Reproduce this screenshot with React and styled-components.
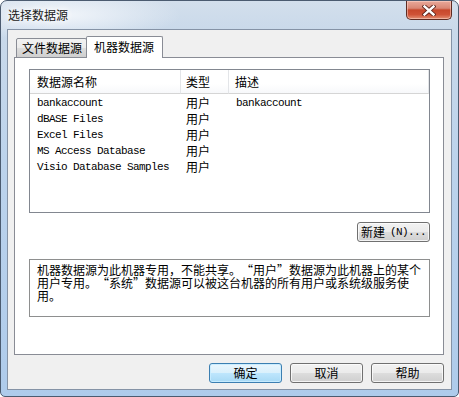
import React from 'react'
import styled, { createGlobalStyle } from 'styled-components'

const GlobalStyle = createGlobalStyle`
    html, body {
        margin: 0;
        padding: 0;
        overflow: hidden;
        background: #fff;
    }
`

const CJK = `"Noto Sans CJK SC", "Liberation Sans", sans-serif`
const MONO = `"Liberation Mono", "Noto Sans CJK SC", monospace`

const Window = styled.div`
    width: 459px;
    height: 397px;
    box-sizing: border-box;
    border: 1px solid #4b5b70;
    border-radius: 7px 7px 5px 5px;
    padding: 0 6px 6px 6px;
    display: flex;
    flex-direction: column;
    background:
        radial-gradient(ellipse 120px 26px at 60px 14px, rgba(245, 248, 252, 0.9), rgba(245, 248, 252, 0) 100%),
        linear-gradient(to bottom, #d3dfec 0px, #c9d9ea 30px, #bcd3ec 160px, #aecbeb 397px);
    font-family: ${CJK};
    font-size: 12px;
    color: #000;
`

const TitleBar = styled.div`
    height: 28px;
    display: flex;
    align-items: flex-start;
    justify-content: space-between;
`

const Title = styled.div`
    padding: 7px 0 0 1px;
    line-height: 14px;
    color: #1a1a1a;
    text-shadow: 0 0 6px #fff, 0 0 10px #fff;
`

const CloseBtn = styled.div`
    width: 46px;
    height: 19px;
    box-sizing: border-box;
    border: 1px solid #5e2b22;
    border-top: none;
    border-radius: 0 0 5px 5px;
    background: linear-gradient(to bottom, #e9a99a 0%, #d98775 40%, #c7472b 50%, #cf5236 75%, #e38f73 100%);
    box-shadow: inset 0 0 0 1px rgba(255, 220, 210, 0.5);
    display: flex;
    align-items: center;
    justify-content: center;
`

const Client = styled.div`
    flex: 1;
    border: 1px solid #8593a6;
    background: #f0f0f0;
    display: flex;
    flex-direction: column;
    padding: 6px 7px 0 6px;
`

const TabStrip = styled.div`
    display: flex;
    align-items: flex-end;
    height: 21px;
    padding-left: 2px;
    position: relative;
    z-index: 1;
`

const Tab = styled.div`
    box-sizing: border-box;
    border: 1px solid #898c95;
    border-bottom: ${({ $active }) => ($active ? 'none' : '1px solid #898c95')};
    border-radius: 2px 2px 0 0;
    width: ${({ $active }) => ($active ? '77px' : '71px')};
    height: ${({ $active }) => ($active ? '22px' : '20px')};
    margin-left: ${({ $active }) => ($active ? '-1px' : '0')};
    margin-bottom: -1px;
    background: ${({ $active }) =>
        $active ? '#fff' : 'linear-gradient(to bottom, #f2f2f2 0%, #ebebeb 50%, #dddddd 51%, #cfcfcf 100%)'};
    padding-left: ${({ $active }) => ($active ? '7px' : '5px')};
    padding-top: ${({ $active }) => ($active ? '3px' : '2px')};
    line-height: 14px;
    font-size: 12px;
    white-space: nowrap;
`

const Panel = styled.div`
    box-sizing: border-box;
    height: 298px;
    border: 1px solid #898c95;
    background: #fff;
    padding: 11px 14px 0 14px;
    display: flex;
    flex-direction: column;
    align-items: flex-start;
`

const List = styled.div`
    box-sizing: border-box;
    width: 401px;
    height: 144px;
    border: 1px solid #828790;
    background: #fff;
`

const Grid = styled.div`
    display: grid;
    grid-template-columns: 151px 48px 200px;
`

const HeadCell = styled.div`
    box-sizing: border-box;
    height: 24px;
    border-right: 1px solid #e3e5e8;
    border-bottom: 1px solid #d5d5d5;
    padding-left: ${({ $pad }) => $pad}px;
    padding-top: 5px;
    line-height: 14px;
    background: linear-gradient(to bottom, #fff 0%, #fff 60%, #f7f8fa 100%);
`

const Rows = styled.div`
    padding-top: 1px;
`

const Cell = styled.div`
    height: 16px;
    line-height: 16px;
    padding-left: ${({ $pad }) => $pad}px;
    white-space: nowrap;
    font-family: ${({ $mono }) => ($mono ? MONO : CJK)};
    font-size: ${({ $mono }) => ($mono ? '11px' : '12px')};
    letter-spacing: ${({ $mono }) => ($mono ? '-0.6px' : '0')};
`

const Button = styled.button`
    box-sizing: border-box;
    width: 73px;
    height: 20px;
    padding: 0;
    border: 1px solid ${({ $primary }) => ($primary ? '#3c7fb1' : '#707070')};
    border-radius: 3px;
    background: ${({ $primary }) =>
        $primary
            ? 'linear-gradient(to bottom, #eaf6fd 0%, #d9f0fc 50%, #bee6fd 51%, #a7d9f5 100%)'
            : 'linear-gradient(to bottom, #f2f2f2 0%, #ebebeb 50%, #dddddd 51%, #cfcfcf 100%)'};
    box-shadow: inset 0 0 0 1px ${({ $primary }) => ($primary ? 'rgba(200,236,255,0.9)' : 'rgba(252,252,252,0.8)')};
    font-family: ${CJK};
    font-size: 12px;
    line-height: 14px;
    color: #000;
    display: flex;
    align-items: center;
    justify-content: center;
`

const NewButton = styled(Button)`
    align-self: flex-end;
    margin-top: 9px;
    margin-right: -1px;
    span {
        margin-left: 5px;
        font-family: ${MONO};
        font-size: 11px;
        letter-spacing: -0.6px;
    }
`

const Note = styled.div`
    box-sizing: border-box;
    width: 401px;
    height: 58px;
    margin-top: 17px;
    border: 1px solid #8e8f8f;
    padding: 3px 0 0 7px;
    font-size: 12px;
    white-space: nowrap;
`

const NoteLine = styled.div`
    height: 13px;
    line-height: 13px;
`

const Quote = styled.span`
    display: inline-block;
    width: 12px;
    text-align: ${({ $open }) => ($open ? 'right' : 'left')};
`

const Footer = styled.div`
    display: flex;
    justify-content: flex-end;
    gap: 8px;
    padding-top: 8px;
`

const cols = [
    { key: 'name', label: '数据源名称', pad: 7 },
    { key: 'type', label: '类型', pad: 5 },
    { key: 'desc', label: '描述', pad: 6 },
]

const sources = [
    { name: 'bankaccount', type: '用户', desc: 'bankaccount' },
    { name: 'dBASE Files', type: '用户', desc: '' },
    { name: 'Excel Files', type: '用户', desc: '' },
    { name: 'MS Access Database', type: '用户', desc: '' },
    { name: 'Visio Database Samples', type: '用户', desc: '' },
]

// split on the curly quotes so each one can take a full-width cell
function renderLine(text) {
    return text.split(/([“”])/).map((part, i) => {
        if (part === '“') return <Quote key={i} $open>“</Quote>
        if (part === '”') return <Quote key={i}>”</Quote>
        return part
    })
}

const noteLines = [
    '机器数据源为此机器专用，不能共享。“用户”数据源为此机器上的某个',
    '用户专用。“系统”数据源可以被这台机器的所有用户或系统级服务使',
    '用。',
]

function CloseGlyph() {
    return (
        <svg width="14" height="11" viewBox="0 0 14 11">
            <path d="M2.5 1.5 L11.5 9.5 M11.5 1.5 L2.5 9.5" stroke="#5a2219" strokeWidth="4.2" strokeLinecap="square" />
            <path d="M2.5 1.5 L11.5 9.5 M11.5 1.5 L2.5 9.5" stroke="#fff" strokeWidth="2.4" strokeLinecap="square" />
        </svg>
    )
}

export default function App() {
    return (
        <>
            <GlobalStyle />
            <Window>
                <TitleBar>
                    <Title>选择数据源</Title>
                    <CloseBtn><CloseGlyph /></CloseBtn>
                </TitleBar>
                <Client>
                    <TabStrip>
                        <Tab>文件数据源</Tab>
                        <Tab $active>机器数据源</Tab>
                    </TabStrip>
                    <Panel>
                        <List>
                            <Grid>
                                {cols.map(c => (
                                    <HeadCell key={c.key} $pad={c.pad}>{c.label}</HeadCell>
                                ))}
                            </Grid>
                            <Rows>
                                {sources.map(s => (
                                    <Grid key={s.name}>
                                        <Cell $mono $pad={7}>{s.name}</Cell>
                                        <Cell $pad={5}>{s.type}</Cell>
                                        <Cell $mono $pad={7}>{s.desc}</Cell>
                                    </Grid>
                                ))}
                            </Rows>
                        </List>
                        <NewButton>新建<span>(N)...</span></NewButton>
                        <Note>
                            {noteLines.map(l => <NoteLine key={l}>{renderLine(l)}</NoteLine>)}
                        </Note>
                    </Panel>
                    <Footer>
                        <Button $primary>确定</Button>
                        <Button>取消</Button>
                        <Button>帮助</Button>
                    </Footer>
                </Client>
            </Window>
        </>
    )
}
